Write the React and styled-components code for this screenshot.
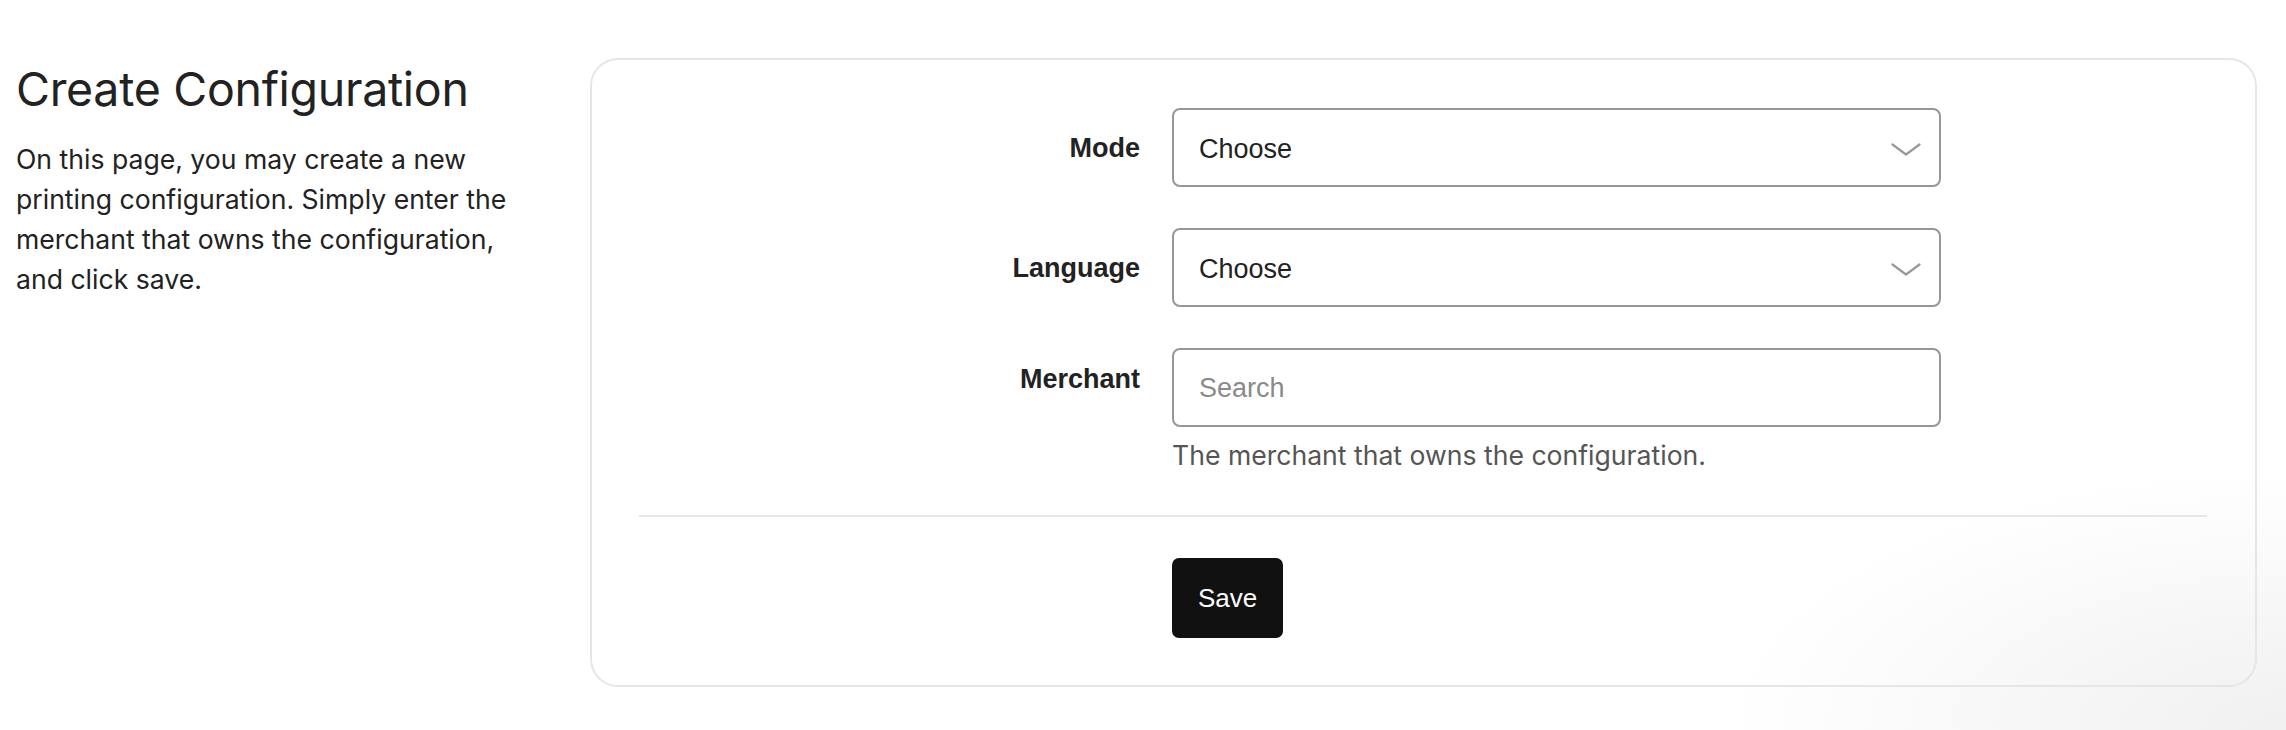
import React from "react";
import styled, { createGlobalStyle } from "styled-components";

const Global = createGlobalStyle`
  html, body { margin: 0; padding: 0; background: #fff; }
  body { font-family: Inter, "Noto Sans", sans-serif; color: #222; }
  * { box-sizing: border-box; }
`;

const Page = styled.div`
  min-height: 730px;
  display: flex;
  align-items: flex-start;
  gap: 62px;
  padding: 58px 29px 40px 16px;
  background: radial-gradient(ellipse 560px 260px at 100% 100%, #f0f0f0 0%, rgba(255,255,255,0) 100%), #fff;
`;

const Intro = styled.div`
  width: 512px;
  flex: none;
`;

const Title = styled.h1`
  margin: 4px 0 22px;
  font-family: Inter, sans-serif;
  font-weight: 400;
  font-size: 46.5px;
  line-height: 55px;
  color: #222;
  letter-spacing: -0.3px;
`;

const Lead = styled.p`
  margin: 0;
  font-family: Inter, sans-serif;
  font-size: 26.6px;
  line-height: 40px;
  color: #222;
`;

const Card = styled.div`
  flex: 1;
  border: 2px solid #e6e6e6;
  border-radius: 28px;
  padding: 48px 48px 47px 47px;
`;

const FormGrid = styled.div`
  display: grid;
  grid-template-columns: 501px 769px;
  column-gap: 32px;
  row-gap: 41px;
`;

const Label = styled.label`
  font-family: "Liberation Sans", Arial, sans-serif;
  font-weight: 700;
  font-size: 27px;
  line-height: 30px;
  color: #222;
  text-align: right;
  align-self: ${(p) => (p.$top ? "start" : "center")};
  padding-top: ${(p) => (p.$top ? "16px" : "0")};
`;

const Field = styled.div`
  display: flex;
  flex-direction: column;
`;

const SelectBox = styled.div`
  height: 79px;
  border: 2px solid #979797;
  border-radius: 8px;
  display: flex;
  align-items: center;
  justify-content: space-between;
  padding: 3px 18px 0 25px;
  font-family: "Liberation Sans", Arial, sans-serif;
  font-size: 27px;
  color: #222;
  background: #fff;
`;

const TextInput = styled.input`
  height: 79px;
  width: 100%;
  border: 2px solid #979797;
  border-radius: 8px;
  padding: 2px 25px 0;
  font-family: "Liberation Sans", Arial, sans-serif;
  font-size: 27px;
  color: #222;
  background: #fff;
  outline: none;
  &::placeholder { color: #8a8a8a; }
`;

const Help = styled.div`
  margin-top: 10px;
  font-family: Inter, sans-serif;
  font-size: 26.6px;
  line-height: 36px;
  color: #555;
`;

const Divider = styled.hr`
  margin: 42px 0 41px;
  border: none;
  height: 2px;
  background: #e6e6e6;
`;

const Actions = styled.div`
  display: grid;
  grid-template-columns: 501px auto;
  column-gap: 32px;
  justify-items: start;
`;

const SaveButton = styled.button`
  grid-column: 2;
  height: 80px;
  padding: 0 26px;
  border: none;
  border-radius: 7px;
  background: #111;
  color: #fff;
  font-family: "Liberation Sans", Arial, sans-serif;
  font-size: 26px;
  cursor: pointer;
`;

const Chevron = () => (
  <svg width="30" height="13" viewBox="0 0 30 13" fill="none">
    <polyline points="1.5,1.5 15,11.5 28.5,1.5" stroke="#9a9a9a" strokeWidth="2.2" strokeLinecap="round" strokeLinejoin="round" />
  </svg>
);

const Select = ({ value }) => (
  <SelectBox role="combobox">
    <span>{value}</span>
    <Chevron />
  </SelectBox>
);

export default function App() {
  return (
    <>
      <Global />
      <Page>
        <Intro>
          <Title>Create Configuration</Title>
          <Lead>
            On this page, you may create a new printing configuration. Simply enter the
            merchant that owns the configuration, and click save.
          </Lead>
        </Intro>
        <Card>
          <FormGrid>
            <Label>Mode</Label>
            <Select value="Choose" />
            <Label>Language</Label>
            <Select value="Choose" />
            <Label $top>Merchant</Label>
            <Field>
              <TextInput placeholder="Search" />
              <Help>The merchant that owns the configuration.</Help>
            </Field>
          </FormGrid>
          <Divider />
          <Actions>
            <SaveButton>Save</SaveButton>
          </Actions>
        </Card>
      </Page>
    </>
  );
}
